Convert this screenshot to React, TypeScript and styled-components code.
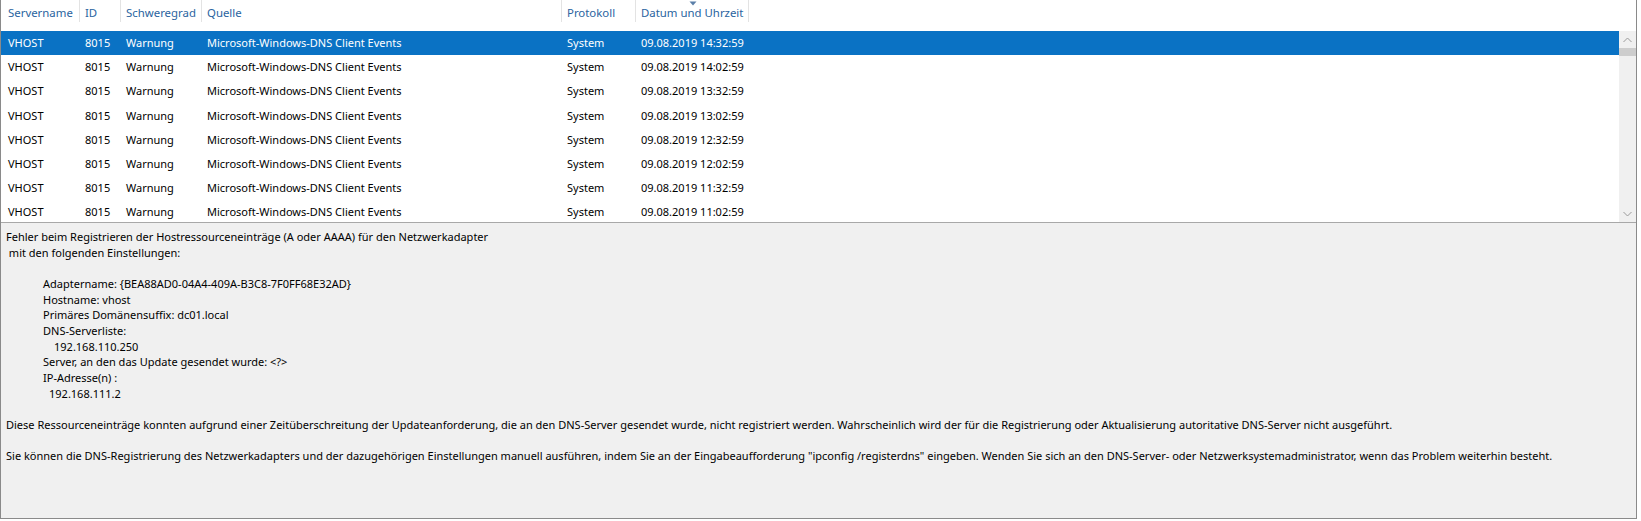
import React from "react";
import styled, { createGlobalStyle } from "styled-components";

const GlobalStyle = createGlobalStyle`
  html, body {
    margin: 0;
    background: #ffffff;
  }
  body {
    font-family: "Noto Sans", "Open Sans", sans-serif;
    font-size: 11px;
    color: #000;
  }
`;

type Column = { key: string; title: string; width: number; sorted?: boolean };

const columns: Column[] = [
  { key: "server", title: "Servername", width: 79 },
  { key: "id", title: "ID", width: 41 },
  { key: "level", title: "Schweregrad", width: 81 },
  { key: "source", title: "Quelle", width: 360 },
  { key: "log", title: "Protokoll", width: 74 },
  { key: "date", title: "Datum und Uhrzeit", width: 113, sorted: true },
];

const times = ["14:32:59", "14:02:59", "13:32:59", "13:02:59", "12:32:59", "12:02:59", "11:32:59", "11:02:59"];

const events = times.map((t) => ({
  server: "VHOST",
  id: "8015",
  level: "Warnung",
  source: "Microsoft-Windows-DNS Client Events",
  log: "System",
  date: `09.08.2019 ${t}`,
}));

const Frame = styled.div`
  width: 1637px;
  height: 519px;
  box-sizing: border-box;
  border-left: 1px solid #8a8a8a;
  border-right: 1px solid #8a8a8a;
  border-bottom: 1px solid #8a8a8a;
  display: flex;
  flex-direction: column;
  background: #fff;
`;

const ListArea = styled.div`
  height: 222px;
  display: flex;
  flex-direction: column;
  flex-shrink: 0;
`;

const HeaderRow = styled.div`
  height: 31px;
  display: flex;
  flex-shrink: 0;
`;

const HeaderCell = styled.div<{ $w: number; $first?: boolean }>`
  position: relative;
  width: ${(p) => p.$w}px;
  flex-shrink: 0;
  box-sizing: border-box;
  padding: 5px 0 0 ${(p) => (p.$first ? 7 : 5)}px;
  font-size: 11.4px;
  line-height: 16px;
  color: #2a64a0;
  white-space: nowrap;

  &::after {
    content: "";
    position: absolute;
    right: 0;
    top: 0;
    width: 1px;
    height: 22px;
    background: #e3e3e3;
  }
`;

const SortArrow = styled.svg`
  position: absolute;
  top: 1px;
  left: 50%;
  margin-left: -4px;
`;

const Body = styled.div`
  flex: 1;
  display: flex;
  min-height: 0;
`;

const Rows = styled.div`
  flex: 1;
  overflow: hidden;
`;

const Row = styled.div<{ $selected?: boolean }>`
  height: 24.2px;
  display: flex;
  align-items: center;
  background: ${(p) => (p.$selected ? "#0a72c4" : "transparent")};
  color: ${(p) => (p.$selected ? "#fff" : "#000")};
`;

const Cell = styled.div<{ $w: number; $first?: boolean }>`
  width: ${(p) => p.$w}px;
  flex-shrink: 0;
  box-sizing: border-box;
  padding-left: ${(p) => (p.$first ? 7 : 5)}px;
  white-space: nowrap;
  line-height: 16px;
`;

const ScrollBar = styled.div`
  width: 17px;
  flex-shrink: 0;
  background: #f0f0f0;
  display: flex;
  flex-direction: column;
`;

const ScrollButton = styled.div`
  height: 17px;
  display: flex;
  align-items: center;
  justify-content: center;
`;

const Thumb = styled.div`
  height: 8px;
  background: #cdcdcd;
`;

const Track = styled.div`
  flex: 1;
`;

const Details = styled.div`
  flex: 1;
  border-top: 1px solid #a8a8a8;
  background: #f0f0f0;
  padding: 6px 0 0 5px;
  line-height: 15.66px;
  white-space: pre;
  overflow: hidden;
`;

const Line = styled.div<{ $indent?: number }>`
  height: 15.66px;
  padding-left: ${(p) => p.$indent ?? 0}px;
`;

const Chevron = ({ up }: { up?: boolean }) => (
  <svg width="9" height="6" viewBox="0 0 9 6">
    <polyline
      points={up ? "0.5,5 4.5,1 8.5,5" : "0.5,1 4.5,5 8.5,1"}
      fill="none"
      stroke="#9a9a9a"
      strokeWidth="1"
    />
  </svg>
);

const detailLines: { text: string; indent?: number }[] = [
  { text: "Fehler beim Registrieren der Hostressourceneinträge (A oder AAAA) für den Netzwerkadapter" },
  { text: " mit den folgenden Einstellungen:" },
  { text: "" },
  { text: "Adaptername: {BEA88AD0-04A4-409A-B3C8-7F0FF68E32AD}", indent: 37 },
  { text: "Hostname: vhost", indent: 37 },
  { text: "Primäres Domänensuffix: dc01.local", indent: 37 },
  { text: "DNS-Serverliste:", indent: 37 },
  { text: "192.168.110.250", indent: 48 },
  { text: "Server, an den das Update gesendet wurde: <?>", indent: 37 },
  { text: "IP-Adresse(n) :", indent: 37 },
  { text: "192.168.111.2", indent: 43 },
  { text: "" },
  {
    text: "Diese Ressourceneinträge konnten aufgrund einer Zeitüberschreitung der Updateanforderung, die an den DNS-Server gesendet wurde, nicht registriert werden. Wahrscheinlich wird der für die Registrierung oder Aktualisierung autoritative DNS-Server nicht ausgeführt.",
  },
  { text: "" },
  {
    text: 'Sie können die DNS-Registrierung des Netzwerkadapters und der dazugehörigen Einstellungen manuell ausführen, indem Sie an der Eingabeaufforderung "ipconfig /registerdns" eingeben. Wenden Sie sich an den DNS-Server- oder Netzwerksystemadministrator, wenn das Problem weiterhin besteht.',
  },
];

export default function App() {
  return (
    <>
      <GlobalStyle />
      <Frame>
        <ListArea>
          <HeaderRow>
            {columns.map((c, i) => (
              <HeaderCell key={c.key} $w={c.width} $first={i === 0}>
                {c.sorted && (
                  <SortArrow width="8" height="5" viewBox="0 0 8 5">
                    <polygon points="0.5,0.5 7.5,0.5 4,4.5" fill="#5b7fa8" />
                  </SortArrow>
                )}
                {c.title}
              </HeaderCell>
            ))}
          </HeaderRow>
          <Body>
            <Rows>
              {events.map((e, r) => (
                <Row key={e.date} $selected={r === 0}>
                  {columns.map((c, i) => (
                    <Cell key={c.key} $w={c.width} $first={i === 0}>
                      {e[c.key as keyof typeof e]}
                    </Cell>
                  ))}
                </Row>
              ))}
            </Rows>
            <ScrollBar>
              <ScrollButton>
                <Chevron up />
              </ScrollButton>
              <Thumb />
              <Track />
              <ScrollButton>
                <Chevron />
              </ScrollButton>
            </ScrollBar>
          </Body>
        </ListArea>
        <Details>
          {detailLines.map((l, i) => (
            <Line key={i} $indent={l.indent}>
              {l.text}
            </Line>
          ))}
        </Details>
      </Frame>
    </>
  );
}
